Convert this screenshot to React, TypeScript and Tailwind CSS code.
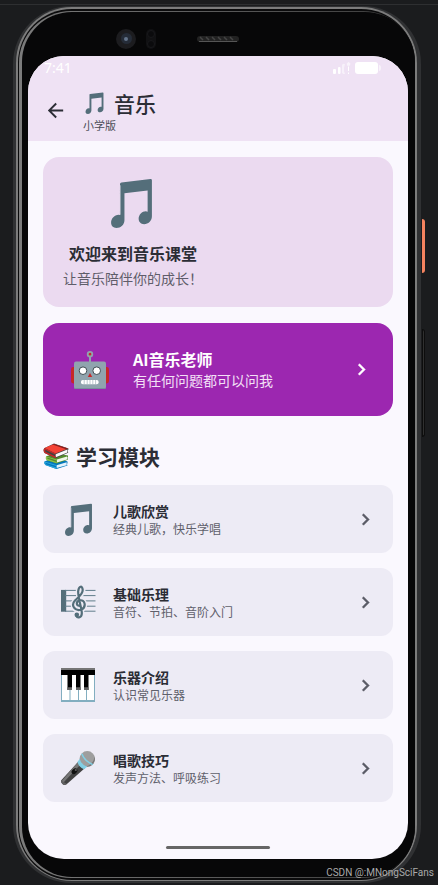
import type { ReactNode } from "react";

type IconProps = { className?: string };

function NoteIcon({ className }: IconProps) {
  return (
    <svg viewBox="0 0 40 49" className={className} aria-hidden="true">
      <path
        fill="#546e7a"
        d="M8.7 6.2Q8.7 4.7 10.2 4.5L38.6 1Q40 .9 40 2.2V37.5C40 42 36.4 45.3 32.4 45.3C29 45.3 27 43 27 40C27 36 30.4 32.6 34 32.6Q35.2 32.6 35.8 33V12.2L13.1 15V41.3C13.1 45.6 9.4 48.9 5.3 48.9C2 48.9 0 46.8 0 43.8C0 39.8 3.4 36.1 7.3 36.1Q8.2 36.1 8.7 36.3Z"
      />
      <path fill="#a9b0bd" d="M8.7 7h.8v29h-.8z" />
    </svg>
  );
}

function RobotIcon({ className }: IconProps) {
  return (
    <svg viewBox="0 0 38 38" className={className} aria-hidden="true">
      <path stroke="#90a4ae" strokeWidth="2" d="M19 5v7" />
      <circle cx="19" cy="3.2" r="2.3" fill="#c62828" stroke="#90a4ae" strokeWidth="1.8" />
      <rect x="0" y="16" width="38" height="16.5" rx="2.4" fill="#c62828" />
      <rect x="3" y="10.5" width="32" height="27.5" rx="2" fill="#90a4ae" />
      <path fill="#78909c" d="M3 37h32q0 1-2 1H5q-2 0-2-1z" />
      <circle cx="12" cy="19.7" r="3.8" fill="#fff" stroke="#424f55" strokeWidth="1" />
      <circle cx="25.7" cy="19.7" r="3.8" fill="#fff" stroke="#424f55" strokeWidth="1" />
      <path fill="#c62828" d="M19 22l2.200 3.900h-4.400z" />
      <rect x="10" y="29" width="17.600" height="4.200" rx="1.800" fill="#fff" />
      <path stroke="#90a4ae" strokeWidth=".6" d="M13.200 29v4.200M16.200 29v4.200M19 29v4.200M21.800 29v4.200M24.600 29v4.200" />
    </svg>
  );
}

function BooksIcon({ className }: IconProps) {
  return (
    <svg viewBox="0 0 26 26" className={className} aria-hidden="true">
      <path fill="#0277bd" d="M1.5 18.5L12 14l12.5 4.5v1.8l-.6.6.6 1.6L13.5 26 2.3 22q-1.6-1.6-.8-3.5z" />
      <path fill="#e3f2fd" d="M13.5 22.2l10.2-3v3l-10 2.8z" />
      <path fill="#29a6dc" d="M1.5 18.5L13.5 22l-.2 1L2.6 19.8v1.4l10.9 3.4V26L2.3 22q-1.6-1.6-.8-3.5z" />
      <path fill="#558b2f" d="M3 13.6L12 10l13 2.6v1.2l-.6.7.4 2.2-11 3.8L4 17.3q-1.8-1.6-1-3.7z" />
      <path fill="#f1f8e9" d="M13.8 16.6l10.2-3v3l-10 3z" />
      <path fill="#8bc34a" d="M3 13.6l10.8 3v.9L4.3 14.6v1.2l9.5 3.2v1.3L4 17.3q-1.8-1.6-1-3.7z" />
      <path fill="#424242" d="M1.2 5.2L11 .6l14.5 5v1l-.8.5.5 2.7-12.6 5.5L1.6 10Q-.3 7.6 1.2 5.2z" />
      <path fill="#fafafa" d="M12.6 11.2l11.8-4.6v3l-11.6 4.7z" />
      <path fill="#f44336" d="M1.5 5L11 .9l14 4.7-12.4 5z" />
      <path fill="#c62828" d="M1.5 5l11.1 5.6v1.2L2.3 6.8v2l10.4 4.8v1.6L1.6 10Q-.3 7.6 1.5 5z" />
      <path fill="#7f1d1d" d="M11 .9l14 4.7-1.800.7L9.400 1.600z" />
    </svg>
  );
}

function ScoreIcon({ className }: IconProps) {
  const lines = [5.4, 10.6, 15.9, 21.2, 26.2];
  return (
    <svg viewBox="0 0 35 34" className={className} aria-hidden="true">
      <path fill="#546e7a" d="M0 4.9h5.2v21.8H0z" />
      {lines.map((y) => (
        <path key={y} stroke="#607d8b" strokeWidth="1" d={`M4 ${y}H34.5`} />
      ))}
      <path
        fill="none"
        stroke="#edebf5"
        strokeWidth="5"
        d="M18.6 20.5C15 20.8 14.5 16.8 18.4 15.3C23.5 14 26.5 22 19.5 25.5C13.5 26.5 10 20 14 15.5C17 12 22.5 9.5 22 4.5C21.6.5 18 .3 17.2 6C16.6 11 20.6 23 20.8 27.6C21 32.6 15.5 33.5 14.8 29.6"
      />
      <path
        fill="none"
        stroke="#546e7a"
        strokeWidth="2.2"
        strokeLinecap="round"
        d="M18.6 20.8C15 20.4 14.8 16.6 18.6 15.4C24 14.2 26 22 20 24.8C14 26.6 9.6 20.4 13.8 15.8C16.8 12.3 22 9.5 21.7 4.8C21.3.4 18 .6 17.2 6C16.6 11 20.6 23 20.8 27.8C21 32.8 16.4 33.4 15.4 31"
      />
      <circle cx="15.8" cy="29.7" r="2.3" fill="#546e7a" />
    </svg>
  );
}

function PianoIcon({ className }: IconProps) {
  return (
    <svg viewBox="0 0 34 34" className={className} aria-hidden="true">
      <rect width="34" height="34" fill="#82aec0" />
      <path fill="#fff" d="M1 6h7.500v26H1zM9.500 6H17v26H9.500zM18 6h7v26h-7zM26 6h7v26h-7z" />
      <path fill="#000" d="M0 2h34v5H0zM6.500 6H11v16H6.500zM15 6h4.500v16H15zM23 6h4.500v16H23z" />
      <path fill="#757575" d="M0 0h34v2H0z" />
      <path fill="#616161" d="M6.500 19.300H11V22H6.500zM15 19.300h4.500V22H15zM23 19.300h4.500V22H23z" />
    </svg>
  );
}

function MicIcon({ className }: IconProps) {
  return (
    <svg viewBox="0 0 34 34" className={className} aria-hidden="true">
      <path fill="#424242" d="M17.5 10.5L24 17 6.5 32.5Q3.5 35 1.5 33 -.8 30.5 .5 29z" />
      <path fill="#757575" d="M17.5 10.5L20 13 2.5 31.5 .2 30.5z" />
      <path fill="#616161" d="M.3 29.5L6 33Q3.5 35 1.5 33 -.5 31.5 .3 29.5z" />
      <circle cx="26.300" cy="7.900" r="7.800" fill="#9e9e9e" />
      <path fill="#757575" d="M33.8 6Q34.5 11 31 14q-3 2.5-6.5 1.5 7-1 9.3-9.5z" />
      <path fill="#82cfe5" d="M16.5 10.8l2.3-2.8q1.5 5.8 7.5 7.7L23 18.3q-5.5-2-6.5-7.5z" />
      <path fill="none" stroke="#82cfe5" strokeWidth="1.5" d="M20.8 2.8Q23.5 10 31.8 13.6" />
      <ellipse cx="13.5" cy="20.3" rx="3.3" ry="2.3" fill="#111" transform="rotate(-43 13.5 20.3)" />
      <circle cx="14.8" cy="19" r="1.1" fill="#616161" />
    </svg>
  );
}

function Chevron({ className }: IconProps) {
  return (
    <svg
      viewBox="0 0 24 24"
      fill="currentColor"
      stroke="currentColor"
      strokeWidth=".5"
      className={className}
      aria-hidden="true"
    >
      <path d="M10 6L8.59 7.41 13.17 12l-4.58 4.59L10 18l6-6z" />
    </svg>
  );
}

function StatusBar() {
  return (
    <div className="flex h-6 items-center justify-between pr-[27px] pl-4 text-white">
      <span className="font-['Noto_Sans'] text-[14px] leading-4">7:41</span>
      <svg viewBox="0 0 49 14" className="h-[14px] w-[49px]" fill="currentColor" aria-hidden="true">
        <rect x="1" y="8" width="3" height="5" rx="1" />
        <rect x="6" y="6" width="2.5" height="7" rx="1" />
        <path opacity=".5" d="M10 4q1-2 3-1l-1 4v3l1 3h-2q-1.5-1-1-3z" />
        <path opacity=".6" d="M16.5 .8l2 2-.8 2h-2.500l-.5-2z" />
        <path d="M16 5.5h1V10h-1zM16 11.5h1V13h-1z" />
        <rect x="23" y="1" width="23" height="12" rx="3" />
        <path opacity=".6" d="M47 4q2 0 2 3t-2 3z" />
      </svg>
    </div>
  );
}

function Header() {
  return (
    <header className="bg-[#efe2f4] pb-2">
      <StatusBar />
      <div className="flex items-center gap-4 pt-[9px] pl-4">
        <button type="button" aria-label="返回" className="text-[#2b2d35]">
          <svg viewBox="0 0 24 24" fill="currentColor" className="mb-0.5 h-[23px] w-[23px]" aria-hidden="true">
            <path d="M20 11H7.83l5.59-5.59L12 4l-8 8 8 8 1.41-1.41L7.83 13H20z" />
          </svg>
        </button>
        <div>
          <h1 className="flex items-center gap-[10px] text-[21px] leading-7 font-medium text-[#2b2d35]">
            <NoteIcon className="ml-[2px] h-[22px] w-[19px]" />
            音乐
          </h1>
          <p className="text-[11px] leading-4 text-[#4b4d57]">小学版</p>
        </div>
      </div>
    </header>
  );
}

function WelcomeCard() {
  return (
    <section className="flex rounded-2xl bg-[#ebdaf0] p-5">
      <div className="flex flex-col items-center">
        <NoteIcon className="mt-[1px] mr-1 h-[50px] w-[41px]" />
        <h2 className="mt-[13px] text-[16px] leading-6 font-bold text-[#2b2d35]">欢迎来到音乐课堂</h2>
        <p className="mt-1 text-[14px] leading-[18px] text-[#5f5d6a]">让音乐陪伴你的成长！</p>
      </div>
    </section>
  );
}

function TeacherCard() {
  return (
    <button
      type="button"
      className="flex w-full items-center gap-4 rounded-2xl bg-[#9c27b0] px-5 py-[25px] text-left text-white"
    >
      <span className="flex w-[54px] justify-center">
        <RobotIcon className="h-[38px] w-[38px]" />
      </span>
      <span className="flex flex-1 flex-col">
        <span className="text-[16px] leading-[22px] font-bold">AI音乐老师</span>
        <span className="text-[14px] leading-[21px] text-[#f3e0f6]">有任何问题都可以问我</span>
      </span>
      <Chevron className="h-[23px] w-[23px]" />
    </button>
  );
}

type Module = { title: string; detail: string; icon: ReactNode };

const modules: Module[] = [
  { title: "儿歌欣赏", detail: "经典儿歌，快乐学唱", icon: <NoteIcon className="h-[33px] w-[27px]" /> },
  { title: "基础乐理", detail: "音符、节拍、音阶入门", icon: <ScoreIcon className="h-[34px] w-[35px]" /> },
  { title: "乐器介绍", detail: "认识常见乐器", icon: <PianoIcon className="h-[34px] w-[34px]" /> },
  { title: "唱歌技巧", detail: "发声方法、呼吸练习", icon: <MicIcon className="h-[34px] w-[34px]" /> },
];

function ModuleRow({ title, detail, icon }: Module) {
  return (
    <li>
      <button
        type="button"
        className="flex w-full items-center gap-[15px] rounded-xl bg-[#edebf5] py-4 pr-4 pl-[15px] text-left"
      >
        <span className="flex h-[34px] w-10 items-center justify-center">{icon}</span>
        <span className="flex flex-1 flex-col">
          <span className="text-[14px] leading-5 font-bold text-[#2b2d35]">{title}</span>
          <span className="text-[12px] leading-4 text-[#5f606b]">{detail}</span>
        </span>
        <Chevron className="h-[23px] w-[23px] text-[#5a5b66]" />
      </button>
    </li>
  );
}

function Bezel() {
  return (
    <div className="grid h-[43px] grid-cols-[1fr_auto_1fr] items-center pt-2">
      <div className="flex items-center gap-[10px] pl-[88px]">
        <span className="flex h-5 w-5 items-center justify-center rounded-full bg-[#1c1c1f]">
          <span className="flex h-[11px] w-[11px] items-center justify-center rounded-full bg-[#252c38]">
            <span className="h-1 w-1 rounded-full bg-[#64748b]" />
          </span>
        </span>
        <span className="flex h-5 w-[10px] flex-col items-center justify-between rounded-full bg-[#111113] py-[1px]">
          <span className="h-2 w-2 rounded-full border border-[#18181b] bg-[#0b0b0d]" />
          <span className="h-2 w-2 rounded-full border border-[#18181b] bg-[#0b0b0d]" />
        </span>
      </div>
      <svg viewBox="0 0 42 6" className="h-[6px] w-[42px]" aria-hidden="true">
        <rect width="42" height="6" rx="3" fill="#222" />
        <path
          fill="none"
          stroke="#444"
          strokeWidth="1.5"
          d="M3 1l3 3M9 1l3 3M15 1l3 3M21 1l3 3M27 1l3 3M33 1l3 3"
        />
        <path stroke="#555" strokeWidth="1" d="M2 5.5h38" />
      </svg>
      <span />
    </div>
  );
}

function Screen() {
  return (
    <main className="flex flex-1 flex-col overflow-hidden rounded-[36px] bg-[#faf8fe]">
      <Header />
      <div className="flex flex-1 flex-col gap-4 px-[15px] pt-4">
        <WelcomeCard />
        <TeacherCard />
        <section className="mt-2">
          <h2 className="flex items-center gap-[7px] text-[21px] leading-8 font-bold text-[#2b2d35]">
            <BooksIcon className="h-[26px] w-[26px]" />
            学习模块
          </h2>
          <ul className="mt-[13px] flex flex-col gap-[15px]">
            {modules.map((item) => (
              <ModuleRow key={item.title} {...item} />
            ))}
          </ul>
        </section>
      </div>
      <div className="mb-[10px] h-[3px] w-[104px] self-center rounded-full bg-[#666]" />
    </main>
  );
}

export default function App() {
  return (
    <div className="relative flex min-h-screen flex-col overflow-hidden bg-[#1b1c1e] pr-[17px] pb-[2px] pl-[13px] font-['Noto_Sans_CJK_SC',sans-serif]">
      <div className="absolute inset-x-0 top-1 h-px bg-[#2e2f31]" />
      <div className="absolute top-[219px] right-[13px] h-[54px] w-[3px] rounded-r-sm bg-[#f5835f]" />
      <div className="absolute top-[329px] right-[13px] h-[108px] w-[3px] rounded-r-sm border border-[#0d0d0d] bg-[#303030]" />
      <div className="relative mt-[6px] flex flex-1 flex-col rounded-[58px] bg-[#303133] pt-[1px] pr-1 pb-[2px] pl-[3px]">
        <div className="flex flex-1 flex-col rounded-[56px] bg-[#7c7c7c] pt-[2px] pr-[2px] pb-[1px] pl-[2px]">
          <div className="flex flex-1 flex-col rounded-[54px] bg-[#0b0b0c] pt-[2px] pb-[2px] pl-[1px]">
            <div className="flex flex-1 flex-col rounded-[52px] bg-linear-to-r from-[#7c7c7c] to-[#3a3a3a] pt-[1px] pb-[1px] pl-[3px]">
              <div className="flex flex-1 flex-col rounded-[50px] bg-[#070708] pt-[1px] pr-[7px] pb-[18px] pl-[6px]">
                <Bezel />
                <Screen />
              </div>
            </div>
          </div>
        </div>
      </div>
      <p className="absolute right-1 bottom-[5px] font-[Roboto,sans-serif] text-[10px] leading-[14px] text-[#aaa]">
        CSDN @:MNongSciFans
      </p>
    </div>
  );
}
